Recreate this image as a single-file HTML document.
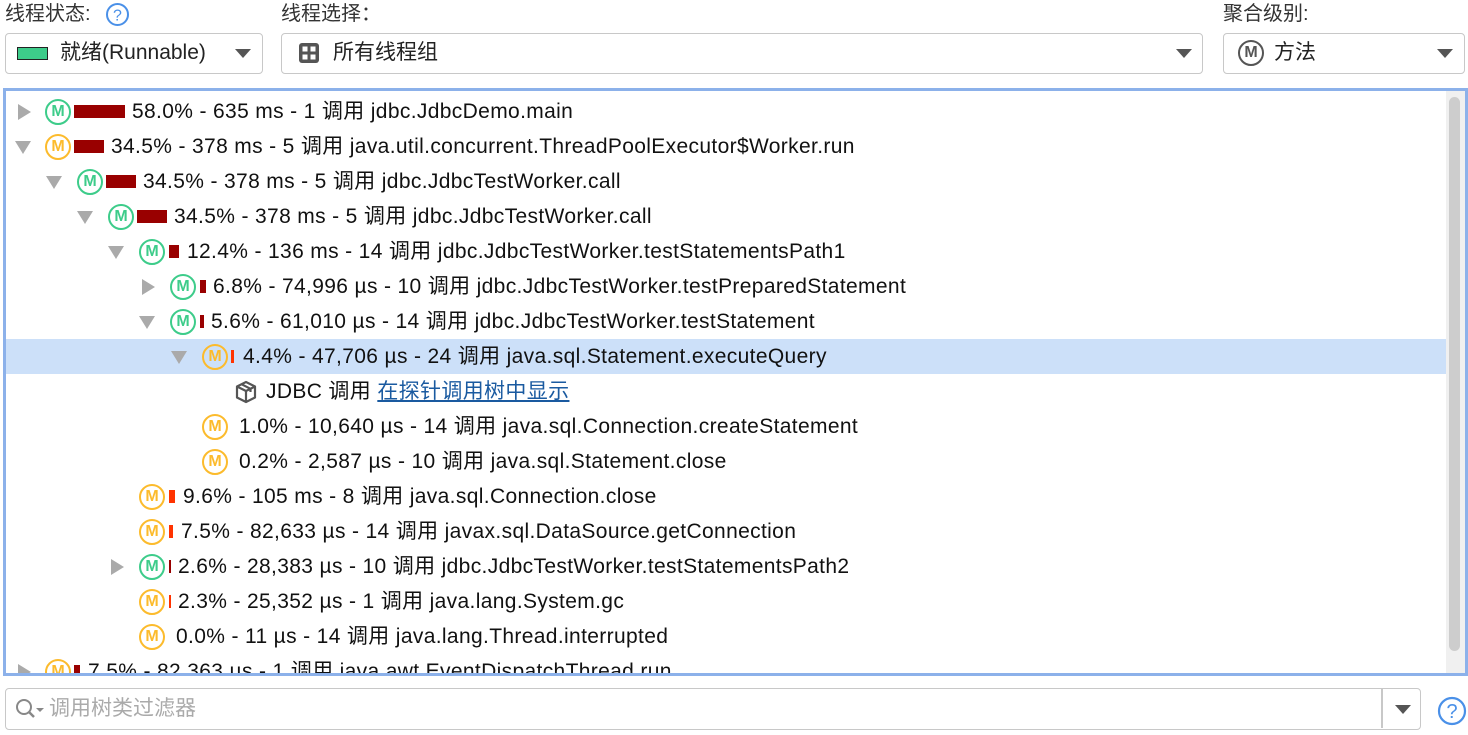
<!DOCTYPE html>
<html><head><meta charset="utf-8"><style>
*{box-sizing:border-box;margin:0;padding:0}
body{width:1468px;height:735px;background:#fff;font-family:"Liberation Sans","Noto Sans CJK SC",sans-serif;color:#111;position:relative;overflow:hidden}
.a{position:absolute;white-space:nowrap}
.lbl{font-size:20px;color:#333;top:0;line-height:28px}
.combo{position:absolute;top:33px;height:41px;border:1.5px solid #c8c8c8;border-radius:4px;background:#fff}
.combo .t{position:absolute;top:0;line-height:38px;font-size:21px;color:#222}
.arr{position:absolute;width:0;height:0;border-left:8px solid transparent;border-right:8px solid transparent;border-top:9px solid #555}
#tree{position:absolute;left:3px;top:88px;width:1465px;height:588px;border:3px solid #8cb1ea;overflow:hidden}
.row{position:absolute;left:0;height:35px;width:1440px}
.row .tx{position:absolute;top:0;line-height:35px;font-size:21px;letter-spacing:0.35px;white-space:nowrap}
.tg{position:absolute;width:0;height:0}
.tr{border-top:8px solid transparent;border-bottom:8px solid transparent;border-left:13px solid #aaa;top:10px}
.td{border-left:8px solid transparent;border-right:8px solid transparent;border-top:13px solid #aaa;top:12px}
.m{position:absolute;top:5px;width:26px;height:26px;border-radius:50%;border:2.5px solid;font:bold 16px "Liberation Sans",sans-serif;display:flex;align-items:center;justify-content:center}
.g{border-color:#3dcc8a;color:#3dcc8a}
.o{border-color:#fcbb2c;color:#fcbb2c}
.bar{position:absolute;top:11px;height:13px;background:#990000}
.br{background:#ff3300}
</style></head><body>
<div class="a lbl" style="left:5px">线程状态:</div>
<svg class="a" style="left:105px;top:2px" width="25" height="25"><circle cx="12.5" cy="12.5" r="10.5" fill="none" stroke="#4a90e8" stroke-width="2"/><text x="12.5" y="18.5" text-anchor="middle" font-size="16" fill="#4a90e8" font-family="Liberation Sans">?</text></svg>
<div class="a lbl" style="left:281px">线程选择：</div>
<div class="a lbl" style="left:1223px">聚合级别:</div>

<div class="combo" style="left:5px;width:258px"><div class="a" style="left:11px;top:13px;width:31px;height:13px;background:#3dcc8a;border:1px solid #222"></div><div class="t" style="left:54px">就绪(Runnable)</div><div class="arr" style="left:229px;top:15px"></div></div>
<div class="combo" style="left:281px;width:922px"><svg class="a" style="left:16px;top:8px" width="22" height="22"><rect x="1" y="1" width="20" height="20" rx="3" fill="#555"/><rect x="4.5" y="4.5" width="5" height="5" fill="#fff"/><rect x="12.5" y="4.5" width="5" height="5" fill="#fff"/><rect x="4.5" y="12.5" width="5" height="5" fill="#fff"/><rect x="12.5" y="12.5" width="5" height="5" fill="#fff"/></svg><div class="t" style="left:51px">所有线程组</div><div class="arr" style="left:894px;top:15px"></div></div>
<div class="combo" style="left:1223px;width:242px"><div class="a" style="left:14px;top:6px;width:26px;height:26px;border-radius:50%;border:2.5px solid #555;font:bold 16px 'Liberation Sans';color:#555;display:flex;align-items:center;justify-content:center">M</div><div class="t" style="left:50px">方法</div><div class="arr" style="left:213px;top:15px"></div></div>

<div id="tree">
<div class="a" style="left:1440px;top:0;width:19px;height:582px;background:#f0f0f0"></div>
<div class="a" style="left:1443px;top:6px;width:11px;height:554px;background:#cdcdcd;border-radius:6px"></div>

<div class="row" style="top:3px"><div class="tg tr" style="left:12px"></div><div class="m g" style="left:39px">M</div><div class="bar" style="left:68px;width:51px"></div><div class="tx" style="left:126px">58.0% - 635 ms - 1 调用 jdbc.JdbcDemo.main</div></div>
<div class="row" style="top:38px"><div class="tg td" style="left:9px"></div><div class="m o" style="left:39px">M</div><div class="bar" style="left:68px;width:30px"></div><div class="tx" style="left:105px">34.5% - 378 ms - 5 调用 java.util.concurrent.ThreadPoolExecutor$Worker.run</div></div>
<div class="row" style="top:73px"><div class="tg td" style="left:40px"></div><div class="m g" style="left:71px">M</div><div class="bar" style="left:100px;width:30px"></div><div class="tx" style="left:137px">34.5% - 378 ms - 5 调用 jdbc.JdbcTestWorker.call</div></div>
<div class="row" style="top:108px"><div class="tg td" style="left:71px"></div><div class="m g" style="left:102px">M</div><div class="bar" style="left:131px;width:30px"></div><div class="tx" style="left:168px">34.5% - 378 ms - 5 调用 jdbc.JdbcTestWorker.call</div></div>
<div class="row" style="top:143px"><div class="tg td" style="left:102px"></div><div class="m g" style="left:133px">M</div><div class="bar" style="left:163px;width:10px"></div><div class="tx" style="left:181px">12.4% - 136 ms - 14 调用 jdbc.JdbcTestWorker.testStatementsPath1</div></div>
<div class="row" style="top:178px"><div class="tg tr" style="left:136px"></div><div class="m g" style="left:164px">M</div><div class="bar" style="left:194px;width:6px"></div><div class="tx" style="left:207px">6.8% - 74,996 µs - 10 调用 jdbc.JdbcTestWorker.testPreparedStatement</div></div>
<div class="row" style="top:213px"><div class="tg td" style="left:133px"></div><div class="m g" style="left:164px">M</div><div class="bar" style="left:194px;width:4px"></div><div class="tx" style="left:205px">5.6% - 61,010 µs - 14 调用 jdbc.JdbcTestWorker.testStatement</div></div>
<div class="row" style="top:248px;background:#cce0f9"><div class="tg td" style="left:165px"></div><div class="m o" style="left:196px">M</div><div class="bar br" style="left:225px;width:3px"></div><div class="tx" style="left:237px">4.4% - 47,706 µs - 24 调用 java.sql.Statement.executeQuery</div></div>
<div class="row" style="top:283px"><svg class="a" style="left:228px;top:6px" width="24" height="24"><path d="M12 2L21 6.5V17.5L12 22L3 17.5V6.5Z M3 6.5L12 11L21 6.5 M12 11V22 M7.5 4.2L16.5 8.8V12" fill="none" stroke="#555" stroke-width="2.2" stroke-linejoin="round"/></svg><div class="tx" style="left:260px">JDBC 调用 <span style="color:#1a5aa0;text-decoration:underline">在探针调用树中显示</span></div></div>
<div class="row" style="top:318px"><div class="m o" style="left:196px">M</div><div class="tx" style="left:233px">1.0% - 10,640 µs - 14 调用 java.sql.Connection.createStatement</div></div>
<div class="row" style="top:353px"><div class="m o" style="left:196px">M</div><div class="tx" style="left:233px">0.2% - 2,587 µs - 10 调用 java.sql.Statement.close</div></div>
<div class="row" style="top:388px"><div class="m o" style="left:133px">M</div><div class="bar br" style="left:163px;width:6px"></div><div class="tx" style="left:177px">9.6% - 105 ms - 8 调用 java.sql.Connection.close</div></div>
<div class="row" style="top:423px"><div class="m o" style="left:133px">M</div><div class="bar br" style="left:163px;width:4px"></div><div class="tx" style="left:175px">7.5% - 82,633 µs - 14 调用 javax.sql.DataSource.getConnection</div></div>
<div class="row" style="top:458px"><div class="tg tr" style="left:105px"></div><div class="m g" style="left:133px">M</div><div class="bar" style="left:163px;width:2px"></div><div class="tx" style="left:172px">2.6% - 28,383 µs - 10 调用 jdbc.JdbcTestWorker.testStatementsPath2</div></div>
<div class="row" style="top:493px"><div class="m o" style="left:133px">M</div><div class="bar br" style="left:163px;width:2px"></div><div class="tx" style="left:172px">2.3% - 25,352 µs - 1 调用 java.lang.System.gc</div></div>
<div class="row" style="top:528px"><div class="m o" style="left:133px">M</div><div class="tx" style="left:170px">0.0% - 11 µs - 14 调用 java.lang.Thread.interrupted</div></div>
<div class="row" style="top:563px"><div class="tg tr" style="left:12px"></div><div class="m o" style="left:39px">M</div><div class="bar" style="left:68px;width:6px"></div><div class="tx" style="left:82px">7.5% - 82,363 µs - 1 调用 java.awt.EventDispatchThread.run</div></div>
</div>

<div class="a" style="left:5px;top:688px;width:1416px;height:42px;border:1.5px solid #c8c8c8;border-radius:4px;background:#fff">
<svg class="a" style="left:8px;top:9px" width="32" height="24"><circle cx="10" cy="9" r="7" fill="none" stroke="#888" stroke-width="2"/><path d="M15 14L20 19" stroke="#888" stroke-width="2.5"/><path d="M22 10h8l-4 4z" fill="#888"/></svg>
<div class="a" style="left:43px;top:0;line-height:39px;font-size:21px;color:#aaa">调用树类过滤器</div>
<div class="a" style="left:1375px;top:0;width:1.5px;height:39px;background:#c8c8c8"></div>
<div class="arr" style="left:1389px;top:16px"></div>
</div>
<svg class="a" style="left:1437px;top:696px" width="30" height="30"><circle cx="15" cy="15" r="13" fill="none" stroke="#4a90e8" stroke-width="2.2"/><text x="15" y="22" text-anchor="middle" font-size="20" fill="#4a90e8" font-family="Liberation Sans">?</text></svg>
</body></html>
